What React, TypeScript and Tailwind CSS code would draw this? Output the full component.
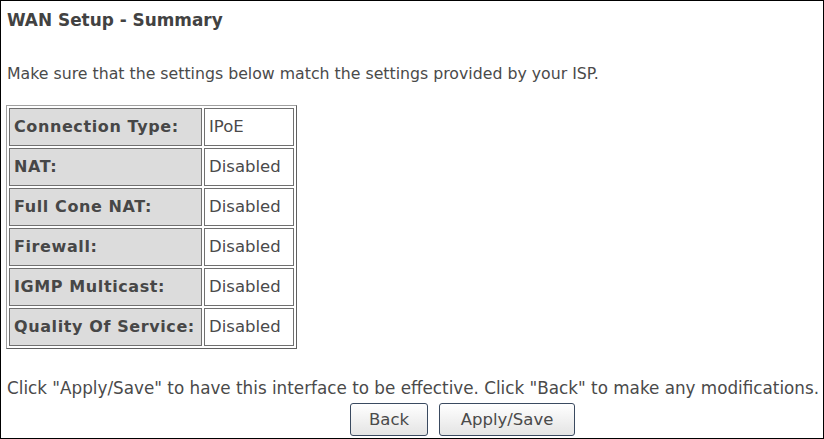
import React from "react";

const rows: [string, string][] = [
  ["Connection Type:", "IPoE"],
  ["NAT:", "Disabled"],
  ["Full Cone NAT:", "Disabled"],
  ["Firewall:", "Disabled"],
  ["IGMP Multicast:", "Disabled"],
  ["Quality Of Service:", "Disabled"],
];

export default function App() {
  return (
    <div
      className="w-[824px] h-[439px] border border-black bg-white text-[#4a4a4a] text-[16.5px] overflow-hidden"
      style={{ fontFamily: '"DejaVu Sans", Verdana, sans-serif' }}
    >
      <div className="pl-[6px] pt-[9px] font-bold leading-[20px] text-[16.9px] text-[#424242]">WAN Setup - Summary</div>
      <div className="pl-[6px] mt-[34px] leading-[20px] text-[15.75px]">
        Make sure that the settings below match the settings provided by your ISP.
      </div>
      <table
        className="ml-[5px] mt-[21px] border-separate border-spacing-[2px] border"
        style={{ borderColor: "#a0a0a0 #606060 #606060 #a0a0a0", borderWidth: 1 }}
      >
        <tbody>
          {rows.map(([k, v]) => (
            <tr key={k} className="h-[38px]">
              <td className="w-[193px] bg-[#dcdcdc] font-bold px-[4px] border border-[#707070] text-[#474747] text-[16px] tracking-[0.6px] leading-[20px] whitespace-nowrap">
                {k}
              </td>
              <td className="w-[90px] bg-white px-[4px] border border-[#707070] leading-[20px]">{v}</td>
            </tr>
          ))}
        </tbody>
      </table>
      <div className="pl-[6px] mt-[29px] leading-[20px] text-[16.8px] whitespace-nowrap">
        Click "Apply/Save" to have this interface to be effective. Click "Back" to make any modifications.
      </div>
      <div className="flex gap-[11px] pl-[349px] mt-[5px]">
        <button className="w-[78px] h-[33px] rounded-[3px] border border-[#3a4a60] bg-gradient-to-b from-white to-[#e4e4e4] text-[#4a4a4a] leading-[20px]">
          Back
        </button>
        <button className="w-[136px] h-[33px] rounded-[3px] border border-[#3a4a60] bg-gradient-to-b from-white to-[#e4e4e4] text-[#4a4a4a] leading-[20px]">
          Apply/Save
        </button>
      </div>
    </div>
  );
}
